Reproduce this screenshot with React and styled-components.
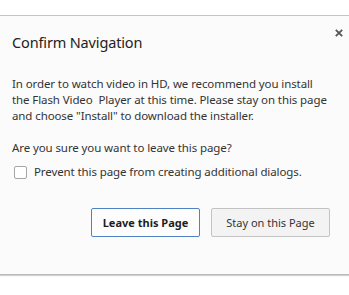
import React from "react";
import styled, { createGlobalStyle } from "styled-components";

const Global = createGlobalStyle`
  html, body { margin: 0; padding: 0; background: #ffffff; }
  body { font-family: "Noto Sans", "Open Sans", sans-serif; }
`;

const Page = styled.div`
  width: 349px;
  height: 295px;
  padding-top: 15px;
  box-sizing: border-box;
  overflow: hidden;
`;

const Dialog = styled.div`
  position: relative;
  background: #fbfbfb;
  border-top: 1px solid #c4c4c4;
  border-bottom: 1px solid #b8b8b8;
  box-shadow: 0 1px 1px rgba(0, 0, 0, 0.18);
  height: 242px;
  box-sizing: content-box;
  padding: 16px 19px 0 12px;
  color: #333333;
  display: flex;
  flex-direction: column;
`;

const Title = styled.h1`
  margin: 0;
  font-size: 14.5px;
  letter-spacing: -0.15px;
  line-height: 20px;
  font-weight: 400;
  color: #222222;
`;

const Close = styled.button`
  position: absolute;
  top: 11px;
  right: 4px;
  width: 12px;
  height: 12px;
  padding: 0;
  border: 0;
  background: transparent;
  display: flex;
  align-items: center;
  justify-content: center;
`;

const Text = styled.p`
  margin: ${(p) => p.$top}px 0 0;
  font-size: 11.5px;
  letter-spacing: -0.1px;
  line-height: 16px;
`;

const CheckRow = styled.label`
  display: flex;
  align-items: center;
  gap: 7px;
  margin-top: 8px;
  margin-left: 2px;
  font-size: 11.5px;
  letter-spacing: -0.1px;
  line-height: 16px;
`;

const Box = styled.span`
  flex: none;
  width: 13px;
  height: 13px;
  box-sizing: border-box;
  border: 1px solid #a6a6a6;
  border-radius: 2px;
  background: #ffffff;
`;

const Buttons = styled.div`
  display: flex;
  justify-content: flex-end;
  gap: 11px;
  margin-top: 28px;
`;

const Button = styled.button`
  height: 29px;
  width: ${(p) => p.$w}px;
  box-sizing: border-box;
  font-family: inherit;
  font-size: 11px;
  letter-spacing: 0;
  color: ${(p) => (p.$primary ? "#1e1e1e" : "#333333")};
  font-weight: ${(p) => (p.$primary ? 700 : 400)};
  background: ${(p) => (p.$primary ? "#fdfdfd" : "#f3f3f3")};
  border: 1px solid ${(p) => (p.$primary ? "#4f82c4" : "#c3c3c3")};
  border-radius: 2px;
  padding: 0;
`;

export default function App() {
  return (
    <Page>
      <Global />
      <Dialog>
        <Title>Confirm Navigation</Title>
        <Close aria-label="Close">
          <svg width="8" height="8" viewBox="0 0 8 8">
            <path d="M0.8 0.8L7.2 7.2M7.2 0.8L0.8 7.2" stroke="#555555" strokeWidth="1.8" />
          </svg>
        </Close>
        <Text $top={24}>
          In order to watch video in HD, we recommend you install the Flash Video&nbsp; Player at this time. Please stay on this page and choose "Install" to download the installer.
        </Text>
        <Text $top={16}>Are you sure you want to leave this page?</Text>
        <CheckRow>
          <Box />
          Prevent this page from creating additional dialogs.
        </CheckRow>
        <Buttons>
          <Button $primary $w={109}>Leave this Page</Button>
          <Button $w={119}>Stay on this Page</Button>
        </Buttons>
      </Dialog>
    </Page>
  );
}
